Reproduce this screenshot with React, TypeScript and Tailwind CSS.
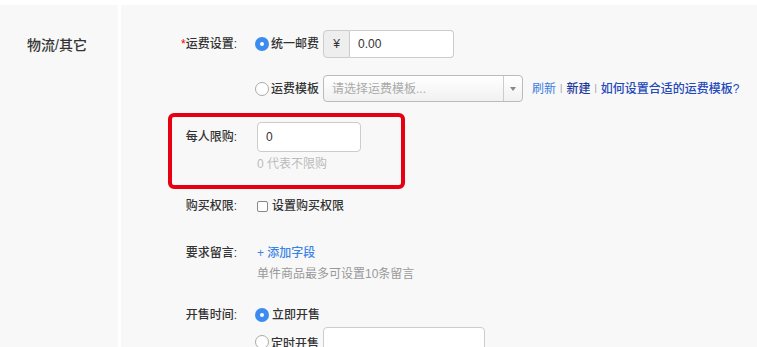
const font = { fontFamily: '"Liberation Sans", "Noto Sans CJK SC", sans-serif' }

function Radio({ checked }: { checked?: boolean }) {
  return checked ? (
    <span className="w-[14px] h-[14px] rounded-full bg-[#3a8cf0] flex items-center justify-center shrink-0">
      <span className="w-[4px] h-[4px] rounded-full bg-white" />
    </span>
  ) : (
    <span className="w-[14px] h-[14px] rounded-full bg-white border border-[#aaa] shrink-0" />
  )
}

function Label({ children, w = 'w-[69px]' }: { children: React.ReactNode; w?: string }) {
  return <div className={`${w} text-right text-[12px] font-medium text-[#333] shrink-0`}>{children}</div>
}

export default function App() {
  return (
    <div className="w-[757px] h-[347px] bg-white overflow-hidden pt-[5px]" style={font}>
      <div className="flex h-full">
        {/* left column */}
        <div className="w-[118px] bg-[#f8f8f8] shrink-0">
          <div className="pl-[27px] pt-[30px] text-[14px] font-medium text-[#333] leading-[20px]">物流/其它</div>
        </div>
        <div className="w-[3px] bg-white shrink-0" />

        {/* form */}
        <div className="flex-1 bg-[#f8f8f8] pl-[47px] pt-[25px]">
          {/* 运费设置 */}
          <div className="flex items-center h-[28px]">
            <Label>
              <span className="text-[#e00]">*</span>运费设置:
            </Label>
            <div className="ml-[18px] flex items-center">
              <Radio checked />
              <span className="ml-[2px] text-[12px] font-medium text-[#333]">统一邮费</span>
              <div className="ml-[4px] flex h-[28px]">
                <div className="w-[27px] bg-[#eee] border border-[#ccc] rounded-l-[4px] flex items-center justify-center text-[12px] text-[#333]">¥</div>
                <div className="w-[104px] bg-white border border-l-0 border-[#ccc] rounded-r-[4px] flex items-center pl-[8px] text-[12px] text-[#333]">0.00</div>
              </div>
            </div>
          </div>

          {/* 运费模板 */}
          <div className="flex items-center h-[27px] mt-[17px]">
            <Label>{''}</Label>
            <div className="ml-[18px] flex items-center">
              <Radio />
              <span className="ml-[2px] text-[12px] font-medium text-[#333]">运费模板</span>
              <div className="ml-[4px] flex h-[27px] w-[200px] border border-[#bbb] rounded-[4px] bg-gradient-to-b from-white to-[#f1f1f1]">
                <div className="flex-1 flex items-center pl-[8px] text-[12px] text-[#aaa]">请选择运费模板...</div>
                <div className="w-[19px] border-l border-[#ccc] flex items-center justify-center">
                  <span className="w-0 h-0 border-l-[3px] border-r-[3px] border-t-[4px] border-l-transparent border-r-transparent border-t-[#888]" />
                </div>
              </div>
              <div className="ml-[9px] flex items-center text-[12px]">
                <span className="text-[#3b7be0]">刷新</span>
                <span className="mx-[4px] text-[9px] text-[#999]">|</span>
                <span className="text-[#1d3a9e] font-medium">新建</span>
                <span className="mx-[4px] text-[9px] text-[#999]">|</span>
                <span className="text-[#2449b8] font-medium">如何设置合适的运费模板?</span>
              </div>
            </div>
          </div>

          {/* 每人限购 (highlighted) */}
          <div className="mt-[11px] w-[237px] border-[4px] border-[#e60012] rounded-[6px] pt-[5px] pb-[13px]">
            <div className="flex items-center h-[30px]">
              <Label w="w-[65px]">每人限购:</Label>
              <div className="ml-[20px] w-[104px] h-[30px] bg-white border border-[#ccc] rounded-[4px] flex items-center pl-[8px] text-[12px] text-[#333]">0</div>
            </div>
            <div className="ml-[85px] mt-[4px] text-[12px] text-[#bbb] leading-[16px]">0 代表不限购</div>
          </div>

          {/* 购买权限 */}
          <div className="flex items-center h-[16px] mt-[9px]">
            <Label>购买权限:</Label>
            <div className="ml-[20px] flex items-center">
              <span className="w-[11px] h-[11px] border border-[#888] rounded-[2px] bg-white" />
              <span className="ml-[4px] text-[12px] font-medium text-[#333]">设置购买权限</span>
            </div>
          </div>

          {/* 要求留言 */}
          <div className="flex items-center h-[16px] mt-[31px]">
            <Label>要求留言:</Label>
            <span className="ml-[20px] text-[12px] font-medium text-[#3a84e6]">+ 添加字段</span>
          </div>
          <div className="ml-[89px] mt-[5px] text-[12px] text-[#999] leading-[16px]">单件商品最多可设置10条留言</div>

          {/* 开售时间 */}
          <div className="flex items-center h-[16px] mt-[25px]">
            <Label>开售时间:</Label>
            <div className="ml-[18px] flex items-center">
              <Radio checked />
              <span className="ml-[3px] text-[12px] font-medium text-[#333]">立即开售</span>
            </div>
          </div>
          <div className="flex items-start mt-[12px]">
            <Label>{''}</Label>
            <div className="ml-[18px] flex items-start">
              <Radio />
              <span className="ml-[2px] mt-[1px] text-[12px] font-medium text-[#333] leading-[16px]">定时开售</span>
              <div className="ml-[4px] -mt-[8px] w-[162px] h-[30px] bg-white border border-[#ccc] rounded-[4px]" />
            </div>
          </div>
        </div>
      </div>
    </div>
  )
}
